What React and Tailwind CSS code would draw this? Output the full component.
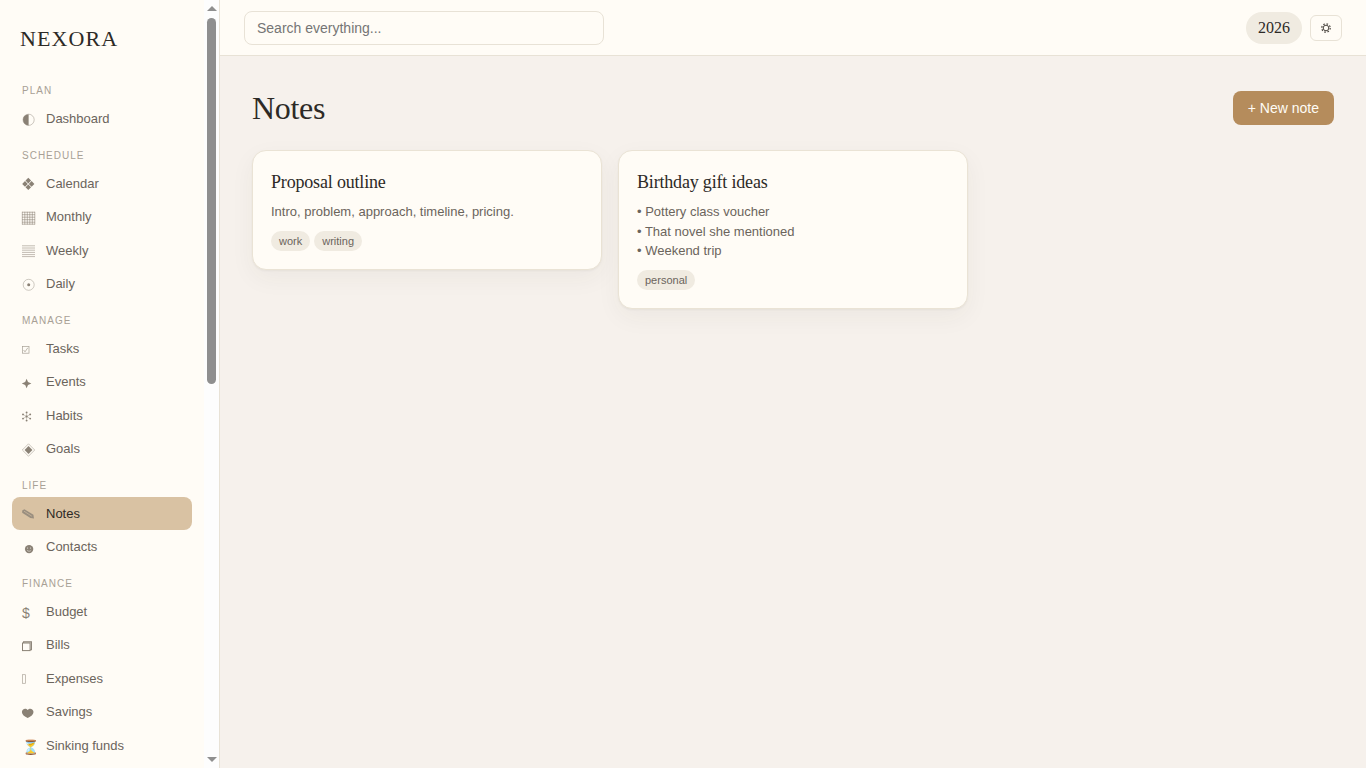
import React from 'react';

const INK = '#8a8175';

/* glyph-like icons, drawn in a 16x16 box that starts at the item's left edge */
const ICONS = {
  half: (
    <>
      <circle cx="6.6" cy="8.8" r="5.6" fill="none" stroke={INK} strokeOpacity="0.55" strokeWidth="0.8" />
      <path d="M6.6 3.2a5.6 5.6 0 0 0 0 11.2z" fill={INK} />
    </>
  ),
  diamonds: (
    <path
      d="M6.3 2.8l2.8 2.8-2.8 2.8-2.8-2.8zM3 6.1l2.8 2.8L3 11.7.2 8.9zM9.6 6.1l2.8 2.8-2.8 2.8-2.8-2.8zM6.3 9.4l2.8 2.8L6.3 15l-2.8-2.8z"
      fill={INK}
    />
  ),
  grid: (
    <path
      d="M.3 2.8v12.7M2.8 2.8v12.7M5.3 2.8v12.7M7.8 2.8v12.7M10.3 2.8v12.7M12.8 2.8v12.7M0 3.2h13M0 5.7h13M0 8.2h13M0 10.7h13M0 13.2h13M0 15.2h13"
      stroke={INK}
      strokeOpacity="0.8"
      strokeWidth="0.7"
      fill="none"
    />
  ),
  lines: (
    <path
      d="M0 3.8h13M0 6h13M0 8.2h13M0 10.4h13M0 12.6h13M0 14.6h13"
      stroke={INK}
      strokeOpacity="0.75"
      strokeWidth="0.7"
      fill="none"
    />
  ),
  ring: (
    <>
      <circle cx="6.7" cy="8.8" r="5.5" fill="none" stroke={INK} strokeOpacity="0.6" strokeWidth="0.7" />
      <circle cx="6.7" cy="8.8" r="1.5" fill={INK} />
    </>
  ),
  check: (
    <>
      <rect x="0.4" y="6.6" width="6.6" height="6.6" fill="none" stroke={INK} strokeOpacity="0.75" strokeWidth="0.7" />
      <path d="M1.6 10l1.4 1.8 2.8-4" fill="none" stroke={INK} strokeOpacity="0.8" strokeWidth="0.7" />
    </>
  ),
  star: <path d="M4.6 4.8l1.4 3.3 3.4 1.4-3.4 1.4-1.4 3.3-1.4-3.3L-.2 9.5l3.4-1.4z" fill={INK} />,
  snow: (
    <g fill={INK}>
      <circle cx="4.6" cy="5.4" r="0.95" />
      <circle cx="4.6" cy="13.6" r="0.95" />
      <circle cx="1" cy="7.4" r="0.95" />
      <circle cx="8.2" cy="7.4" r="0.95" />
      <circle cx="1" cy="11.6" r="0.95" />
      <circle cx="8.2" cy="11.6" r="0.95" />
      <circle cx="4.6" cy="9.5" r="1.1" />
      <path d="M4.6 5.4v8.2M1 7.4l7.2 4.2M8.2 7.4L1 11.6" stroke={INK} strokeOpacity="0.7" strokeWidth="0.6" />
    </g>
  ),
  goal: (
    <>
      <path d="M6.5 2.8l6.2 6.2-6.2 6.2L.3 9z" fill="none" stroke={INK} strokeOpacity="0.55" strokeWidth="0.8" />
      <path d="M6.5 5.1l3.9 3.9-3.9 3.9L2.6 9z" fill={INK} />
    </>
  ),
  pencil: (
    <>
      <path d="M.2 5.6l2.2-1.4 9 5.6.6 3.7-3.6-.4L.2 7.8z" fill={INK} fillOpacity="0.8" />
      <path d="M2 6.2l7.8 5" stroke="#d9c2a3" strokeWidth="0.6" fill="none" />
    </>
  ),
  smile: (
    <>
      <circle cx="7.1" cy="10.1" r="4.2" fill={INK} />
      <path d="M5 11.2c1 1.4 3.2 1.4 4.2 0" stroke="#fffcf6" strokeOpacity="0.8" strokeWidth="0.6" fill="none" />
      <circle cx="5.6" cy="9" r="0.5" fill="#fffcf6" />
      <circle cx="8.6" cy="9" r="0.5" fill="#fffcf6" />
    </>
  ),
  copy: (
    <>
      <rect x="0.5" y="6" width="7.6" height="7.6" fill="none" stroke={INK} strokeWidth="1" />
      <path d="M1.6 6V4.9h7.8v7.8H8.2" fill="none" stroke={INK} strokeWidth="1.1" />
    </>
  ),
  box: <rect x="0.4" y="4.7" width="3.2" height="8.6" fill="none" stroke={INK} strokeOpacity="0.7" strokeWidth="0.7" />,
  heart: (
    <path d="M5.7 13.9C2.4 12.2-.1 10.6-.1 7.9c0-2.6 3.7-4.6 5.8-1.8 2.1-2.8 5.8-.8 5.8 1.8 0 2.7-2.5 4.3-5.8 6z" fill={INK} />
  ),
};

const NAV = [
  { title: 'Plan', items: [{ icon: 'half', label: 'Dashboard' }] },
  {
    title: 'Schedule',
    items: [
      { icon: 'diamonds', label: 'Calendar' },
      { icon: 'grid', label: 'Monthly' },
      { icon: 'lines', label: 'Weekly' },
      { icon: 'ring', label: 'Daily' },
    ],
  },
  {
    title: 'Manage',
    items: [
      { icon: 'check', label: 'Tasks' },
      { icon: 'star', label: 'Events' },
      { icon: 'snow', label: 'Habits' },
      { icon: 'goal', label: 'Goals' },
    ],
  },
  {
    title: 'Life',
    items: [
      { icon: 'pencil', label: 'Notes', active: true },
      { icon: 'smile', label: 'Contacts' },
    ],
  },
  {
    title: 'Finance',
    items: [
      { text: '$', label: 'Budget' },
      { icon: 'copy', label: 'Bills' },
      { icon: 'box', label: 'Expenses' },
      { icon: 'heart', label: 'Savings' },
      { text: '⏳', label: 'Sinking funds' },
    ],
  },
];

const NOTES = [
  {
    title: 'Proposal outline',
    lines: ['Intro, problem, approach, timeline, pricing.'],
    tags: ['work', 'writing'],
  },
  {
    title: 'Birthday gift ideas',
    lines: ['• Pottery class voucher', '• That novel she mentioned', '• Weekend trip'],
    tags: ['personal'],
  },
];

function NavItem({ item }) {
  return (
    <a
      className={`flex items-center gap-2 rounded-lg px-[10px] py-[7px] text-[13px] leading-[19.5px] ${
        item.active ? 'bg-[#d9c2a3] text-[#2d2a26]' : 'text-[#6b645c]'
      }`}
    >
      <span className="flex h-4 w-4 shrink-0 items-center text-sm text-[#8a8175]">
        {item.icon ? (
          <svg viewBox="0 0 16 16" className="h-4 w-4 overflow-visible" aria-hidden="true">
            {ICONS[item.icon]}
          </svg>
        ) : (
          <span className="translate-y-[2px] whitespace-nowrap">{item.text}</span>
        )}
      </span>
      {item.label}
    </a>
  );
}

/* the sidebar's scrollbar, with its two arrows */
function ScrollRail() {
  return (
    <div className="flex w-[15px] shrink-0 flex-col bg-[#fdfdfd]">
      <div className="flex h-[18px] shrink-0 justify-center pt-[6px]">
        <svg width="10" height="5" aria-hidden="true">
          <path d="M5 0l5 5H0z" fill="#8f8f8f" />
        </svg>
      </div>
      <div className="mx-[3px] h-[366px] rounded-full bg-[#8f8f8f]" />
      <div className="flex-1" />
      <div className="flex h-[18px] shrink-0 justify-center pt-[7px]">
        <svg width="10" height="5" aria-hidden="true">
          <path d="M0 0h10L5 5z" fill="#8f8f8f" />
        </svg>
      </div>
    </div>
  );
}

function Sidebar() {
  return (
    <aside className="flex h-screen w-[220px] shrink-0 border-r border-[#e8e2d6] bg-[#fffcf6]">
      <div className="min-w-0 flex-1 overflow-hidden px-3 pt-[25px]">
        <div className="mb-[18px] px-2 font-['Liberation_Serif',serif] text-[22px] leading-[28px] tracking-[0.05em] text-[#2d2a26]">
          NEXORA
        </div>
        {NAV.map((group) => (
          <div key={group.title}>
            <div className="px-[10px] pt-[12px] pb-[4px] text-[10px] leading-[15px] tracking-[0.1em] text-[#a8a095] uppercase">
              {group.title}
            </div>
            {group.items.map((item) => (
              <NavItem key={item.label} item={item} />
            ))}
          </div>
        ))}
      </div>
      <ScrollRail />
    </aside>
  );
}

function NoteCard({ note }) {
  return (
    <div className="rounded-[14px] border border-[#eae3d5] bg-[#fffcf6] p-[18px] shadow-[0_1px_2px_rgba(60,50,30,0.05),0_8px_24px_rgba(60,50,30,0.05)]">
      <h3 className="mb-[6.2px] font-['Liberation_Serif',serif] text-lg leading-[27px] font-normal tracking-[-0.01em] text-[#2d2a26]">
        {note.title}
      </h3>
      <div className="text-[13px] leading-[19.5px] text-[#6b645c]">
        {note.lines.map((line) => (
          <div key={line}>{line}</div>
        ))}
      </div>
      <div className="mt-[9.5px] flex gap-1">
        {note.tags.map((tag) => (
          <span key={tag} className="rounded-full bg-[#f0ebe1] px-2 py-[1.5px] text-[11px] leading-[16.5px] text-[#6b645c]">
            {tag}
          </span>
        ))}
      </div>
    </div>
  );
}

export default function App() {
  return (
    <div className="flex h-screen overflow-hidden bg-[#f6f1ec] font-['Liberation_Sans',Arial,sans-serif]">
      <Sidebar />
      <div className="flex min-w-0 flex-1 flex-col">
        <header className="flex h-14 shrink-0 items-center justify-between border-b border-[#e8e2d6] bg-[#fffcf6] px-6">
          <input
            placeholder="Search everything..."
            className="h-[34px] w-[360px] rounded-lg border border-[#e8e2d6] bg-[#fffcf6] px-3 text-sm text-[#2d2a26] outline-none placeholder:text-[#757575]"
          />
          <div className="flex items-center gap-2">
            <span className="rounded-full bg-[#f0ebe1] px-3 py-[5px] font-['Liberation_Serif',serif] text-base leading-[22px] text-[#2d2a26]">
              2026
            </span>
            <button className="flex h-[26px] w-8 items-center justify-center rounded-md border border-[#e8e2d6]">
              <svg width="12" height="12" viewBox="0 0 12 12" aria-hidden="true">
                <circle cx="6" cy="6" r="2.8" fill="none" stroke="#4a453f" strokeWidth="1" />
                <circle cx="6" cy="6" r="4.2" fill="none" stroke="#4a453f" strokeWidth="1.2" strokeDasharray="1.6 1.7" />
              </svg>
            </button>
          </div>
        </header>
        <main className="flex-1 p-8">
          <div className="mb-[22px] flex h-10 items-center justify-between">
            <h1 className="font-['Liberation_Serif',serif] text-[32px] leading-10 font-normal tracking-[-0.01em] text-[#2d2a26]">
              Notes
            </h1>
            <button className="h-[34px] rounded-lg bg-[#b58c5c] px-[15px] text-sm text-[#fffcf6]">
              + New note
            </button>
          </div>
          <div className="grid grid-cols-3 items-start gap-4">
            {NOTES.map((note) => (
              <NoteCard key={note.title} note={note} />
            ))}
          </div>
        </main>
      </div>
    </div>
  );
}
